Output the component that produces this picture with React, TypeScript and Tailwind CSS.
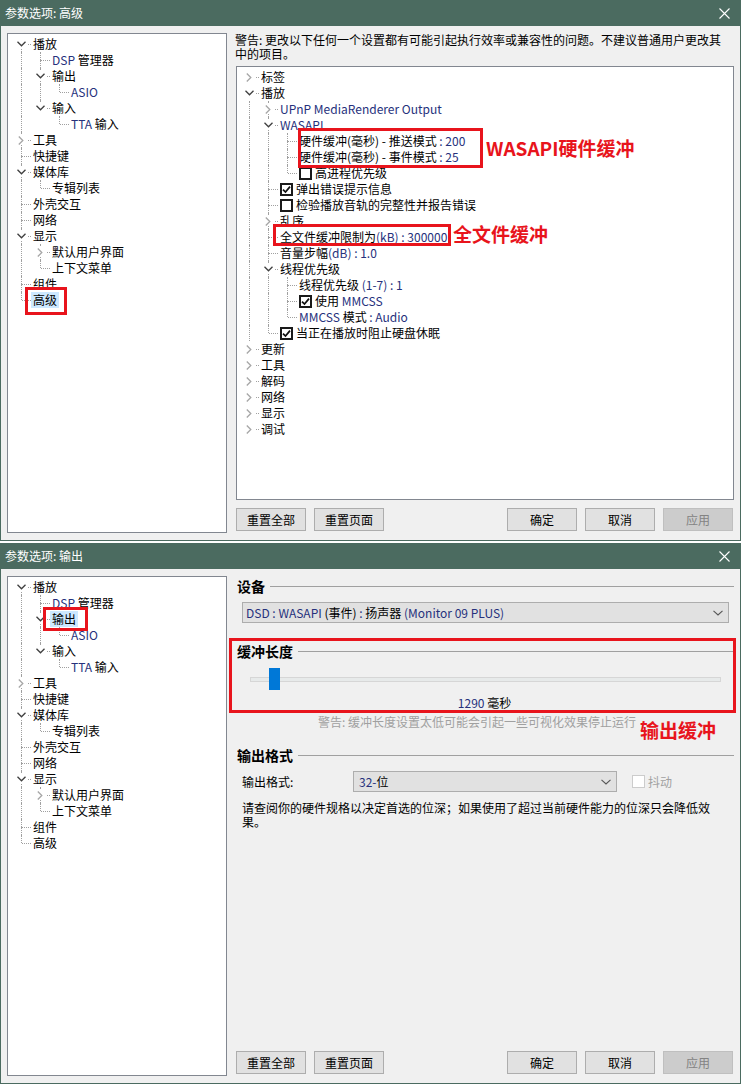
import React from 'react'

type TNode = {
  label: React.ReactNode
  children?: TNode[]
  open?: boolean
  check?: boolean
  selected?: boolean
}

type Row = { node: TNode; depth: number; guides: boolean[]; last: boolean; first: boolean }

function flatten(nodes: TNode[], depth = 0, guides: boolean[] = [], out: Row[] = []) {
  nodes.forEach((n, i) => {
    out.push({ node: n, depth, guides, last: i === nodes.length - 1, first: depth === 0 && i === 0 })
    if (n.children && n.open) flatten(n.children, depth + 1, [...guides, i < nodes.length - 1], out)
  })
  return out
}

const L = ({ children }: { children: React.ReactNode }) => <span className="text-[#26317c]">{children}</span>

function Chevron({ open }: { open?: boolean }) {
  return (
    <div className="absolute left-[2px] top-[3px] flex h-[10px] w-[14px] items-center justify-center bg-white">
      {open ? (
        <svg width="9" height="6" viewBox="0 0 9 6">
          <path d="M0.5 0.8 4.5 4.8 8.5 0.8" fill="none" stroke="#3f3f3f" strokeWidth="1.3" />
        </svg>
      ) : (
        <svg width="6" height="9" viewBox="0 0 6 9">
          <path d="M0.8 0.5 4.8 4.5 0.8 8.5" fill="none" stroke="#a6a6a6" strokeWidth="1.3" />
        </svg>
      )}
    </div>
  )
}

function Check({ on }: { on: boolean }) {
  return (
    <span className="mr-[3px] flex h-[13px] w-[13px] shrink-0 items-center justify-center border-2 border-[#1a1a1a] bg-white">
      {on && (
        <svg width="9" height="9" viewBox="0 0 9 9">
          <path d="M1 4.6 3.5 7.1 8 1.6" fill="none" stroke="#111" strokeWidth="1.7" />
        </svg>
      )}
    </span>
  )
}

function TreeRows({ nodes, rootLines }: { nodes: TNode[]; rootLines: boolean }) {
  const rows = flatten(nodes)
  return (
    <>
      {rows.map((r, idx) => {
        const vert = r.depth > 0 || rootLines
        return (
          <div key={idx} className="flex h-4 items-center whitespace-nowrap">
            {r.guides.map((g, i) => (
              <div key={i} className="relative h-4 w-[19px] shrink-0">
                {g && <div className="absolute left-[9px] top-0 h-4 border-l border-dotted border-[#a0a0a0]" />}
              </div>
            ))}
            <div className="relative h-4 w-[19px] shrink-0">
              {vert && !r.first && <div className="absolute left-[9px] top-0 h-2 border-l border-dotted border-[#a0a0a0]" />}
              {vert && !r.last && <div className="absolute left-[9px] top-2 h-2 border-l border-dotted border-[#a0a0a0]" />}
              <div className="absolute left-[10px] right-0 top-2 border-t border-dotted border-[#a0a0a0]" />
              {r.node.children && <Chevron open={r.node.open} />}
            </div>
            <div className="ml-[2px] flex h-4 items-center">
              {r.node.check !== undefined && <Check on={r.node.check} />}
              <span className={r.node.selected ? '-ml-[2px] inline-block h-4 bg-[#cce8ff] px-[2px] leading-4' : 'inline-block h-4 leading-4'}>
                {r.node.label}
              </span>
            </div>
          </div>
        )
      })}
    </>
  )
}

function leftTree(sel: string): TNode[] {
  const n = (label: React.ReactNode, key: string, extra: Partial<TNode> = {}): TNode => ({ label, selected: key === sel, ...extra })
  return [
    n('播放', '播放', {
      open: true,
      children: [
        n(<><L>DSP</L> 管理器</>, 'dsp'),
        n('输出', '输出', { open: true, children: [n(<L>ASIO</L>, 'asio')] }),
        n('输入', '输入', { open: true, children: [n(<><L>TTA</L> 输入</>, 'tta')] }),
      ],
    }),
    n('工具', '工具', { children: [] }),
    n('快捷键', '快捷键'),
    n('媒体库', '媒体库', { open: true, children: [n('专辑列表', '专辑列表')] }),
    n('外壳交互', '外壳交互'),
    n('网络', '网络'),
    n('显示', '显示', {
      open: true,
      children: [n('默认用户界面', '默认用户界面', { children: [] }), n('上下文菜单', '上下文菜单')],
    }),
    n('组件', '组件'),
    n('高级', '高级'),
  ]
}

const advTree: TNode[] = [
  { label: '标签', children: [] },
  {
    label: '播放',
    open: true,
    children: [
      { label: <L>UPnP MediaRenderer Output</L>, children: [] },
      {
        label: <L>WASAPI</L>,
        open: true,
        children: [
          { label: <>硬件缓冲(毫秒) - 推送模式<L> : 200</L></> },
          { label: <>硬件缓冲(毫秒) - 事件模式<L> : 25</L></> },
          { label: '高进程优先级', check: false },
        ],
      },
      { label: '弹出错误提示信息', check: true },
      { label: '检验播放音轨的完整性并报告错误', check: false },
      { label: '乱序', children: [] },
      { label: <>全文件缓冲限制为<L>(kB) : 300000</L></> },
      { label: <>音量步幅<L>(dB) : 1.0</L></> },
      {
        label: '线程优先级',
        open: true,
        children: [
          { label: <>线程优先级 <L>(1-7) : 1</L></> },
          { label: <>使用 <L>MMCSS</L></>, check: true },
          { label: <><L>MMCSS</L> 模式 <L>: Audio</L></> },
        ],
      },
      { label: '当正在播放时阻止硬盘休眠', check: true },
    ],
  },
  { label: '更新', children: [] },
  { label: '工具', children: [] },
  { label: '解码', children: [] },
  { label: '网络', children: [] },
  { label: '显示', children: [] },
  { label: '调试', children: [] },
]

function Btn({ children, className = '', disabled }: { children: React.ReactNode; className?: string; disabled?: boolean }) {
  return (
    <div
      className={`flex h-[23px] w-[70px] items-center justify-center border text-[12px] ${
        disabled ? 'border-[#bfbfbf] bg-[#cccccc] text-[#838383]' : 'border-[#adadad] bg-[#e1e1e1] text-black'
      } ${className}`}
    >
      {children}
    </div>
  )
}

function Window({ title, tree, children }: { title: string; tree: React.ReactNode; children: React.ReactNode }) {
  return (
    <div className="flex h-[541px] w-[741px] flex-col bg-[#4b6b60]">
      <div className="flex h-[26px] shrink-0 items-center justify-between pl-[5px] pr-[11px] text-white">
        <span className="text-[12px] leading-none">{title}</span>
        <svg width="11" height="11" viewBox="0 0 11 11">
          <path d="M0.5 0.5 10.5 10.5 M10.5 0.5 0.5 10.5" stroke="#fff" strokeWidth="1.1" />
        </svg>
      </div>
      <div className="mx-px mb-px flex flex-1 items-start bg-[#f0f0f0] pl-[6px] pt-[7px]">
        <div className="relative h-[500px] w-[220px] shrink-0 border border-[#828790] bg-white pl-[4px] pt-[2px]">{tree}</div>
        <div className="ml-[8px] flex h-[498px] w-[499px] flex-col">
          <div className="flex-1">{children}</div>
          <div className="flex h-[23px] pl-px pr-px">
            <Btn>重置全部</Btn>
            <Btn className="ml-[8px]">重置页面</Btn>
            <Btn className="ml-auto">确定</Btn>
            <Btn className="ml-[8px]">取消</Btn>
            <Btn className="ml-[8px]" disabled>应用</Btn>
          </div>
        </div>
      </div>
    </div>
  )
}

const RedBox = ({ className }: { className: string }) => (
  <div className={`pointer-events-none absolute border-[3px] border-[#e8141c] ${className}`} />
)

function RedNote({ children, className }: { children: React.ReactNode; className: string }) {
  return (
    <div className={`pointer-events-none absolute whitespace-nowrap text-[19px] font-bold leading-[24px] text-[#e8141c] ${className}`}>
      {children}
    </div>
  )
}

function Group({ title }: { title: string }) {
  return (
    <div className="flex h-5 items-center pl-[2px]">
      <span className="text-[14px] font-bold leading-5">{title}</span>
      <div className="ml-[5px] h-px flex-1 bg-[#a0a0a0]" />
    </div>
  )
}

function DownArrow() {
  return (
    <svg width="10" height="6" viewBox="0 0 10 6">
      <path d="M0.5 0.8 5 5 9.5 0.8" fill="none" stroke="#555" strokeWidth="1.1" />
    </svg>
  )
}

export default function App() {
  return (
    <div className="h-[1087px] w-[743px] overflow-hidden bg-white font-['Noto_Sans_CJK_SC',sans-serif] text-[12px] leading-4 text-black">
      <Window
        title="参数选项: 高级"
        tree={
          <>
            <TreeRows nodes={leftTree('高级')} rootLines />
            <RedBox className="left-[17px] top-[253px] h-[28px] w-[42px]" />
          </>
        }
      >
        <p className="w-[490px] leading-[14px]">
          警告: 更改以下任何一个设置都有可能引起执行效率或兼容性的问题。不建议普通用户更改其中的项目。
        </p>
        <div className="relative ml-px mt-[5px] h-[434px] w-[498px] border border-[#828790] bg-white pl-[3px] pt-[2px]">
          <TreeRows nodes={advTree} rootLines={false} />
          <RedBox className="left-[61px] top-[61px] h-[40px] w-[185px]" />
          <RedNote className="left-[249px] top-[69px]">WASAPI硬件缓冲</RedNote>
          <RedBox className="left-[36px] top-[157px] h-[22px] w-[178px]" />
          <RedNote className="left-[216px] top-[155px]">全文件缓冲</RedNote>
        </div>
      </Window>

      <div className="mt-[2px]">
        <Window
          title="参数选项: 输出"
          tree={
            <>
              <TreeRows nodes={leftTree('输出')} rootLines />
              <RedBox className="left-[35px] top-[30px] h-[24px] w-[45px]" />
            </>
          }
        >
          <Group title="设备" />
          <div className="ml-[7px] mr-[5px] mt-[6px] flex h-[21px] items-center border border-[#adadad] bg-[#e1e1e1] pl-[3px] pr-[5px]">
            <span className="flex-1 whitespace-pre">
              <L>DSD : WASAPI</L> (事件) <L>:</L> 扬声器 <L>(Monitor 09 PLUS)</L>
            </span>
            <DownArrow />
          </div>

          <div className="relative mt-[18px]">
            <Group title="缓冲长度" />
            <div className="relative ml-[15px] mt-[7px] h-[22px] w-[471px]">
              <div className="absolute left-0 right-0 top-[9px] h-[5px] border border-[#d6d6d6] bg-[#e7eaea]" />
              <div className="absolute left-[19px] top-0 h-[22px] w-[11px] bg-[#0078d7]" />
            </div>
            <div className="mt-[6px] h-[14px] text-center leading-[14px]">
              <L>1290</L> 毫秒
            </div>
            <RedBox className="-left-[6px] -right-[2px] -top-[3px] -bottom-[3px]" />
          </div>

          <div className="relative mt-[5px] h-[14px] pl-[83px] leading-[14px] text-[#a0a0a0]">
            警告: 缓冲长度设置太低可能会引起一些可视化效果停止运行
            <RedNote className="left-[405px] top-[3px]">输出缓冲</RedNote>
          </div>

          <div className="mt-[16px]">
            <Group title="输出格式" />
          </div>
          <div className="mt-[6px] flex h-[21px] items-center pl-[7px]">
            <span className="w-[111px]">输出格式:</span>
            <div className="flex h-[21px] w-[264px] items-center border border-[#adadad] bg-[#e1e1e1] pl-[5px] pr-[5px]">
              <span className="flex-1">
                <L>32-</L>位
              </span>
              <DownArrow />
            </div>
            <div className="ml-[15px] h-[13px] w-[13px] border border-[#cccccc] bg-white" />
            <span className="ml-[3px] text-[#a0a0a0]">抖动</span>
          </div>
          <p className="mt-[9px] w-[480px] pl-[7px] leading-[14px]">
            请查阅你的硬件规格以决定首选的位深；如果使用了超过当前硬件能力的位深只会降低效果。
          </p>
        </Window>
      </div>
    </div>
  )
}
